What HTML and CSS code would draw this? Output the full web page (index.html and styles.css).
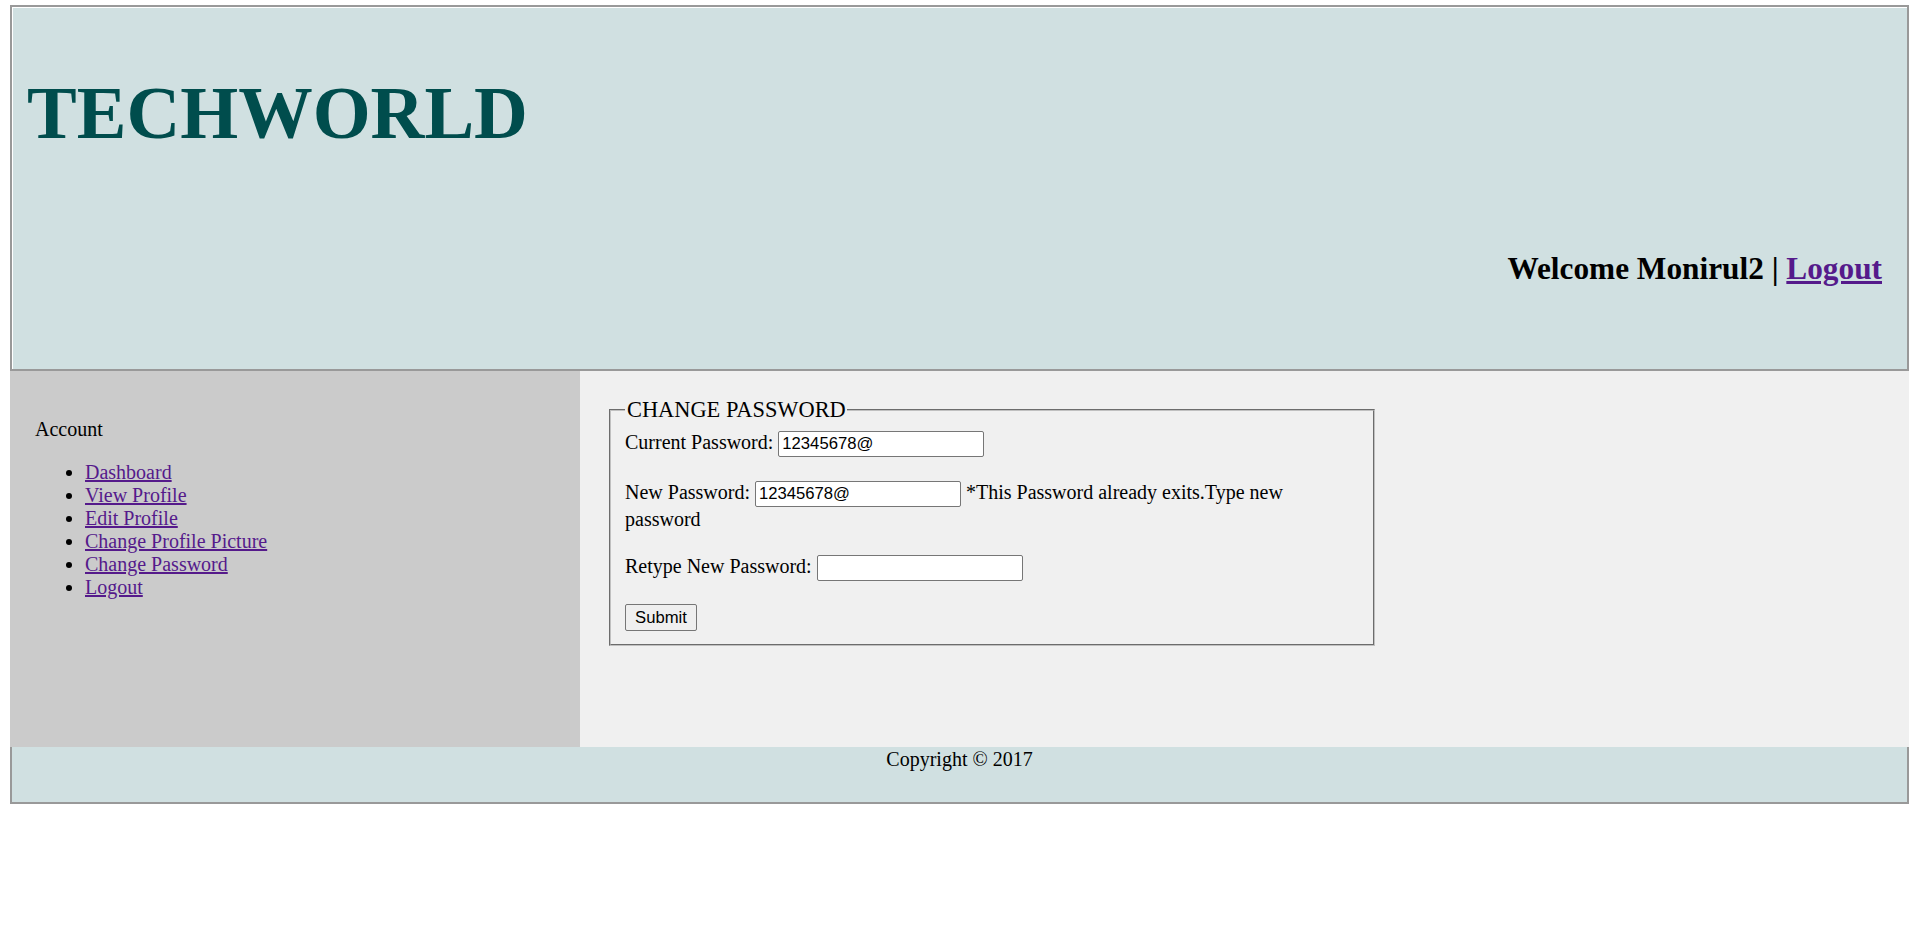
FILE: index.html
```html
<!DOCTYPE html>
<html lang="en">
<head>
<meta charset="utf-8">
<title>Change Password</title>
<link rel="stylesheet" href="styles.css">
</head>
<body>
<div class="page">
  <header class="top">
    <h1 class="brand">TECHWORLD</h1>
    <div class="welcome">Welcome Monirul2 | <a href="#">Logout</a></div>
  </header>
  <div class="middle">
    <nav class="side">
      <p class="side-title">Account</p>
      <ul class="side-list">
        <li><a href="#">Dashboard</a></li>
        <li><a href="#">View Profile</a></li>
        <li><a href="#">Edit Profile</a></li>
        <li><a href="#">Change Profile Picture</a></li>
        <li><a href="#">Change Password</a></li>
        <li><a href="#">Logout</a></li>
      </ul>
    </nav>
    <main class="content">
      <form class="form">
        <fieldset class="box">
          <legend class="box-title">CHANGE PASSWORD</legend>
          <div class="row">Current Password: <input class="field" type="text" value="12345678@"></div>
          <div class="row">New Password: <input class="field" type="text" value="12345678@"> *This Password already exits.Type new password</div>
          <div class="row">Retype New Password: <input class="field" type="text" value=""></div>
          <div class="row row-last"><button class="btn" type="button">Submit</button></div>
        </fieldset>
      </form>
    </main>
  </div>
  <footer class="bottom">Copyright © 2017</footer>
</div>
</body>
</html>
```

FILE: styles.css
```css
body {
  margin: 0;
  background: #ffffff;
  font-family: "Liberation Serif", "Times New Roman", serif;
  color: #000000;
}

a {
  color: #551a8b;
}

.page {
  width: 1899px;
  margin: 5px 0 0 10px;
}

.top {
  box-sizing: border-box;
  height: 366px;
  border: 2px solid #999999;
  background: #d0e0e1;
  padding: 0 25px 0 15px;
  box-shadow: inset 1px 1px 0 #ffffff;
}

.brand {
  margin: 69px 0 0;
  font-size: 74.5px;
  line-height: 74px;
  font-weight: bold;
  color: #004d4d;
}

.welcome {
  margin-top: 103px;
  text-align: right;
  font-size: 31.3px;
  line-height: 32px;
  font-weight: bold;
}

.middle {
  display: flex;
  height: 376px;
}

.side {
  box-sizing: border-box;
  width: 570px;
  background: #cbcbcb;
  padding: 27px 25px;
  font-size: 20px;
  line-height: 23px;
}

.side-title {
  margin: 20px 0;
}

.side-list {
  margin: 20px 0;
  padding-left: 50px;
}

.content {
  flex: 1;
  background: #f0f0f0;
  padding: 26px 27px 27px;
  font-size: 20px;
}

.form {
  margin: 0;
}

.box {
  box-sizing: border-box;
  width: 766px;
  margin: 0 2px;
  border: 2px groove #c0c0c0;
  padding: 8px 15px 13px 14px;
}

.box-title {
  font-size: 22.4px;
  line-height: 25px;
  padding: 0 1px 0 2px;
}

.row {
  line-height: 25px;
  margin-bottom: 22.5px;
}

.row-last {
  margin-bottom: 0;
}

.field {
  box-sizing: border-box;
  width: 206px;
  height: 26px;
  padding: 1px 3px;
  border: 1px solid #767676;
  border-radius: 2px;
  background: #ffffff;
  font-family: "Liberation Sans", Arial, sans-serif;
  font-size: 16.67px;
  color: #000000;
}

.btn {
  box-sizing: border-box;
  width: 72px;
  height: 27px;
  padding: 1px 7px;
  border: 1px solid #767676;
  border-radius: 2px;
  background: #efefef;
  font-family: "Liberation Sans", Arial, sans-serif;
  font-size: 16.67px;
  color: #000000;
}

.bottom {
  box-sizing: border-box;
  height: 57px;
  border: 2px solid #999999;
  border-top: 0;
  background: #d0e0e1;
  padding-top: 1px;
  text-align: center;
  font-size: 20px;
  line-height: 22px;
}
```
